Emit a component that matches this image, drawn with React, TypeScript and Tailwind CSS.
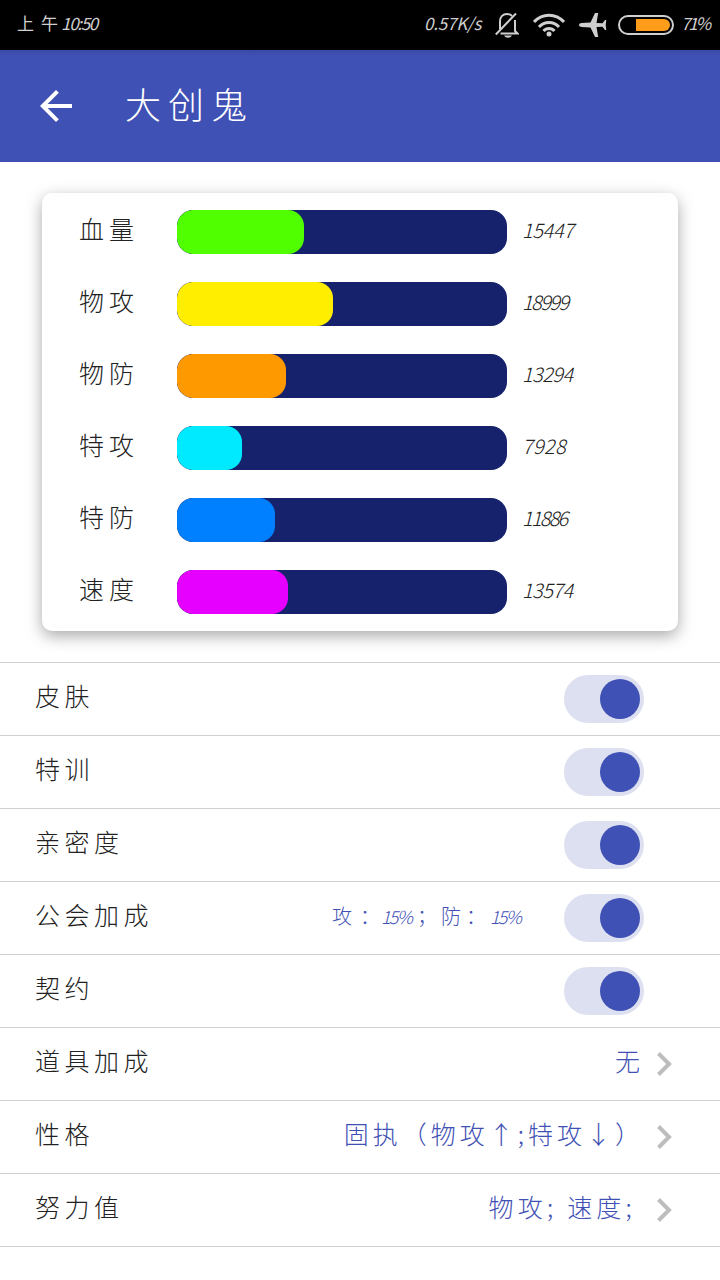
import type { ReactNode } from 'react';

const stats = [
  { label: '血量', value: '15447', width: 127, color: 'bg-[#50ff00]', tracking: 'tracking-[-0.4px]' },
  { label: '物攻', value: '18999', width: 156, color: 'bg-[#ffee00]', tracking: 'tracking-[-1.6px]' },
  { label: '物防', value: '13294', width: 109, color: 'bg-[#ff9900]', tracking: 'tracking-[-0.6px]' },
  { label: '特攻', value: '7928', width: 65, color: 'bg-[#00eaff]', tracking: 'tracking-[0.3px]' },
  { label: '特防', value: '11886', width: 98, color: 'bg-[#0080ff]', tracking: 'tracking-[-1.8px]' },
  { label: '速度', value: '13574', width: 111, color: 'bg-[#e500ff]', tracking: 'tracking-[-0.6px]' },
];

function StatusBar() {
  return (
    <div className="flex h-[50px] items-center bg-black pl-[17px] pr-3 text-[17px] font-normal text-[#cfcfcf]">
      <div className="-mt-1 flex items-center whitespace-nowrap">
        <span className="w-6">上</span>
        <span className="w-5">午</span>
        <span className="italic tracking-[-1.300px]">10:50</span>
      </div>
      <div className="ml-auto flex items-center">
        <span className="-mt-1 mr-3 w-[59px] whitespace-nowrap italic tracking-[-0.2px]">0.57K/s</span>
        <svg width="24" height="26" viewBox="0 0 24 26" fill="none" stroke="#cfcfcf" strokeWidth="2" className="mr-[14px]">
          <path d="M5 17V9.500C5 4.800 8 2 12 2c2 0 3.800.7 5 2M20 8v11l2.500 2.500H5.500" />
          <path d="M.8 22.500 21 1.500" />
          <path d="M9 23.500h8c-1 1.700-2.300 2.200-4 2.200s-3-.5-4-2.200z" fill="#cfcfcf" stroke="none" />
        </svg>
        <svg width="32" height="24" viewBox="0 0 32 24" fill="none" stroke="#cfcfcf" strokeWidth="3" className="mr-[14px]">
          <path d="M1 9c8.500-9 21.500-9 30 0" />
          <path d="M6 14c5.500-6 14.500-6 20 0" />
          <path d="M10.500 18c3-3.500 8-3.500 11 0" />
          <circle cx="16" cy="21" r="2.500" fill="#cfcfcf" stroke="none" />
        </svg>
        <svg width="28" height="26" viewBox="0 0 28 26" fill="#cfcfcf" className="mr-[11px]">
          <path d="M0 13c0-1.200 1.200-1.700 2.500-1.900L11.500 10.500 16 1h3.200L17.500 11l6 .3L26 8h1.300l-.6 5 .6 5H26l-2.500-3.300-6 .3L19.200 25H16l-4.500-9.500-9-.6C1.200 14.700 0 14.200 0 13z" />
        </svg>
        <div className="mr-[7px] flex h-5 w-14 items-center justify-end rounded-full border-2 border-[#cfcfcf] pr-0.5">
          <div className="h-3 w-[34px] rounded-r-full bg-[#ff9c1a]" />
        </div>
        <span className="-mt-1 w-[27px] whitespace-nowrap italic tracking-[-2.200px]">71%</span>
      </div>
    </div>
  );
}

function Row({ label, children }: { label: string; children: ReactNode }) {
  return (
    <div className="flex h-[73px] items-center border-t border-[#cfcfcf] pl-[35px]">
      <span className="-mt-1.5 whitespace-nowrap text-[25px] tracking-[4.500px] text-[#222]">{label}</span>
      <div className="ml-auto flex items-center text-[#3f51b5]">{children}</div>
    </div>
  );
}

function Toggle() {
  return (
    <div className="mr-[76px] flex h-12 w-20 items-center justify-end rounded-full bg-[#dce0f0] pr-1">
      <div className="size-10 rounded-full bg-[#3f51b5]" />
    </div>
  );
}

function Chevron() {
  return (
    <svg width="18" height="26" viewBox="0 0 18 26" fill="none" stroke="#bdbdbd" strokeWidth="4" className="mr-[46px] shrink-0">
      <path d="M2.500 2.500 13 13 2.500 23.500" />
    </svg>
  );
}

export default function App() {
  return (
    <div className="h-[1280px] w-[720px] overflow-hidden bg-white font-['Noto_Sans_CJK_SC',sans-serif] font-light">
      <StatusBar />
      <header className="flex h-28 items-center bg-[#3f51b5] bg-linear-to-b from-[#3a4aa6] to-[#3f51b5] to-5% pl-8 text-white">
        <svg width="48" height="48" viewBox="0 0 24 24" fill="currentColor">
          <path d="M20 11H7.830l5.590-5.590L12 4l-8 8 8 8 1.410-1.410L7.830 13H20z" />
        </svg>
        <h1 className="-mt-1.5 ml-[45px] text-[36px] font-light tracking-[7px]">大创鬼</h1>
      </header>

      <section className="mx-[42px] mt-[31px] flex h-[438px] flex-col gap-7 rounded-[10px] bg-white pl-[37px] pt-[17px] shadow-[0_5px_16px_rgba(0,0,0,0.34)]">
        {stats.map((s) => (
          <div key={s.label} className="flex h-11 items-center">
            <span className="-mt-1.5 w-[98px] whitespace-nowrap text-[25px] tracking-[5px] text-[#222]">{s.label}</span>
            <div className="h-11 w-[330px] overflow-hidden rounded-2xl bg-[#16226b]">
              <div className={`h-full rounded-2xl ${s.color}`} style={{ width: s.width }} />
            </div>
            <span className={`-mt-1 ml-[15px] text-[20px] italic text-[#222] ${s.tracking}`}>{s.value}</span>
          </div>
        ))}
      </section>

      <div className="mt-[31px] border-b border-[#cfcfcf]">
        <Row label="皮肤">
          <Toggle />
        </Row>
        <Row label="特训">
          <Toggle />
        </Row>
        <Row label="亲密度">
          <Toggle />
        </Row>
        <Row label="公会加成">
          <div className="-mt-1 flex w-[232px] items-center whitespace-nowrap text-[20px]">
            <span className="w-7">攻</span>
            <span className="w-[21px]">：</span>
            <span className="w-[36px] text-[18px] italic tracking-[-1.800px]">15%</span>
            <span className="w-6">；</span>
            <span className="w-[25px]">防</span>
            <span className="w-6">：</span>
            <span className="text-[18px] italic tracking-[-1.800px]">15%</span>
          </div>
          <Toggle />
        </Row>
        <Row label="契约">
          <Toggle />
        </Row>
        <Row label="道具加成">
          <span className="-mt-1.5 mr-4 text-[25px]">无</span>
          <Chevron />
        </Row>
        <Row label="性格">
          <span className="-mt-1.5 mr-3 whitespace-nowrap text-[25px] tracking-[4px]">固执（物攻↑;特攻↓）</span>
          <Chevron />
        </Row>
        <Row label="努力值">
          <span className="-mt-1.5 mr-5 whitespace-nowrap text-[25px] tracking-[4.200px]">物攻; 速度;</span>
          <Chevron />
        </Row>
      </div>
    </div>
  );
}
